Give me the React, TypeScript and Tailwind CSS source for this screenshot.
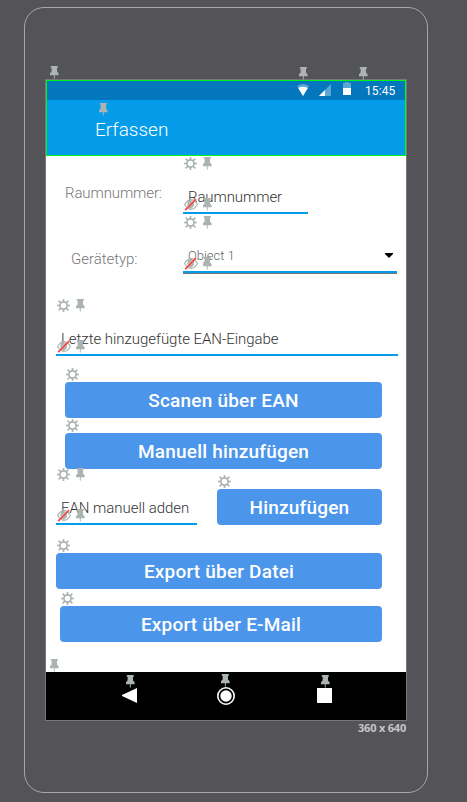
import type { ReactNode } from 'react';

function Pin({ className = '' }: { className?: string }) {
  return (
    <svg className={`absolute h-[13px] w-[9px] ${className}`} viewBox="0 0 9 13" fill="#abb3b3">
      <path d="M.8 0H7.8V1.7H7V5.5L8.6 7.3V9.3H0V7.3L1.6 5.5V1.7H.8Z" />
      <rect x="3.8" y="9" width="1.1" height="3.6" opacity=".85" />
    </svg>
  );
}

function Gear({ className = '' }: { className?: string }) {
  return (
    <svg className={`absolute h-[13px] w-[13px] ${className}`} viewBox="0 0 13 13" fill="none" stroke="#abb3b3">
      <circle cx="6.5" cy="6.5" r="3.6" strokeWidth="1.7" />
      <path
        d="M6.5 0V3M6.5 10V13M0 6.5H3M10 6.5H13M1.6 1.6L4 4M9 9L11.4 11.4M11.4 1.6L9 4M4 9L1.6 11.4"
        strokeWidth="1.6"
      />
    </svg>
  );
}

function HiddenEye() {
  return (
    <svg className="absolute bottom-[3px] left-[1px] h-[13px] w-[14px]" viewBox="0 0 14 13" fill="none">
      <path d="M.6 6.5Q3.5 1.6 7 1.6T13.4 6.5Q10.5 11.4 7 11.4T.6 6.5Z" stroke="#abb3b3" strokeWidth="1.2" />
      <path d="M7 2.2A3.6 4.2 0 0 0 7 10.8L10 8V3Z" fill="#abb3b3" />
      <path d="M1 12L12 1" stroke="#fff" strokeWidth="2.6" opacity=".45" />
      <path d="M1.2 12.2L12 1.2" stroke="#f2463f" strokeWidth="1.7" />
    </svg>
  );
}

function Field({ className, line, children }: { className: string; line: string; children: ReactNode }) {
  return (
    <div className={`relative flex h-[33px] items-start ${line} ${className}`}>
      {children}
      <Gear className="-top-[24px] left-[1px]" />
      <Pin className="-top-[24px] left-[20px]" />
      <HiddenEye />
      <Pin className="bottom-[3px] left-[20px]" />
    </div>
  );
}

function Button({ className, children }: { className: string; children: ReactNode }) {
  return (
    <div
      className={`relative flex h-9 shrink-0 items-center justify-center rounded-[4px] bg-[#4b95eb] pt-0.5 text-[19px] font-medium tracking-[0.2px] text-white ${className}`}
    >
      {children}
      <Gear className="-top-[14px] left-[1px]" />
    </div>
  );
}

const underline = 'shadow-[inset_0_-2px_0_#049be8]';

export default function App() {
  return (
    <div className="h-[802px] w-[467px] overflow-hidden bg-[#545358] pt-[7px] pl-6 font-['Roboto','Liberation_Sans',sans-serif]">
      <div className="h-[786px] w-[404px] rounded-[20px] border border-[#a6a6a9] pt-[71px] pl-5">
        <div className="relative flex h-[642px] w-[362px] flex-col border border-[#777]">
          <header className="flex h-[76px] shrink-0 flex-col border border-[#00f51d] bg-[#049be8] text-white">
            <div className="flex h-[19px] items-center bg-[#0277bd] pl-[250px]">
              <svg className="-mt-px h-3 w-3" viewBox="0 0 12 12" fill="#fff">
                <path d="M0 2Q6-2 12 2L6 12Z" opacity=".35" />
                <path d="M1.2 4Q6 1.3 10.8 4L6 12Z" />
              </svg>
              <svg className="-mt-px ml-[10px] h-3 w-3" viewBox="0 0 12 12" fill="#fff">
                <path d="M12 0V12H0Z" opacity=".35" />
                <path d="M6 6V12H0Z" />
              </svg>
              <svg className="-mt-1 ml-3 h-[13px] w-2" viewBox="0 0 8 13" fill="#fff">
                <path d="M2 0H6V1H8V6H0V1H2Z" opacity=".35" />
                <path d="M0 6H8V13H0Z" />
              </svg>
              <span className="ml-[14px] text-[12px] leading-none tracking-[0.1px]">15:45</span>
            </div>
            <div className="pt-[18px] pl-12 text-[19px] leading-[24px] font-light">Erfassen</div>
          </header>

          <main className="flex h-[516px] shrink-0 flex-col bg-white text-[15px] font-light tracking-[-0.04px] text-[#333]">
            <div className="flex h-[58px] items-end">
              <span className="w-[137px] pb-[12px] pl-[19px] leading-[18px] tracking-[-0.12px] text-[#777]">
                Raumnummer:
              </span>
              <Field className="w-[125px] pl-[5px]" line={underline}>
                <span className="pt-[7px] leading-[18px] tracking-[-0.1px]">Raumnummer</span>
              </Field>
            </div>
            <div className="flex h-[60px] items-end">
              <span className="w-[137px] pb-[6px] pl-[25px] leading-[18px] text-[#777]">Gerätetyp:</span>
              <div className="h-[34px] border-b border-[#777]">
                <Field className="w-[214px] pr-1 pl-[5px]" line={underline}>
                  <span className="pt-2 text-[13px] leading-[16px] text-[#666]">Object 1</span>
                  <svg className="mt-[13px] ml-auto h-[5px] w-2" viewBox="0 0 8 5">
                    <path d="M0 0H8V1L4 5L0 1Z" fill="#000" />
                  </svg>
                </Field>
              </div>
            </div>
            <Field className="mt-[49px] ml-[10px] w-[342px] shrink-0 pl-[5px]" line={underline}>
              <span className="pt-[7px] leading-[18px]">Letzte hinzugefügte EAN-Eingabe</span>
            </Field>
            <Button className="mt-[26px] ml-[19px] w-[317px]">Scanen über EAN</Button>
            <Button className="mt-[15px] ml-[19px] w-[317px]">Manuell hinzufügen</Button>
            <div className="mt-5 flex h-9 shrink-0 items-end gap-5 pl-[10px]">
              <Field className="w-[141px] pl-[5px]" line={underline}>
                <span className="pt-[7px] leading-[18px]">EAN manuell adden</span>
              </Field>
              <Button className="w-[165px]">Hinzufügen</Button>
            </div>
            <Button className="mt-7 ml-[10px] w-[326px]">Export über Datei</Button>
            <Button className="mt-[17px] ml-[14px] w-[322px]">Export über E-Mail</Button>
          </main>

          <nav className="flex h-12 shrink-0 items-center bg-black pb-px pl-[76px]">
            <svg className="h-[15px] w-[15px]" viewBox="0 0 15 15" fill="#fff">
              <path d="M15 0V15L0 8V7Z" />
            </svg>
            <svg className="mt-px ml-[80px] h-[18px] w-[18px]" viewBox="0 0 18 18">
              <circle cx="9" cy="9" r="8.2" fill="none" stroke="#fff" strokeWidth="1.6" />
              <circle cx="9" cy="9" r="5.7" fill="#fff" />
            </svg>
            <span className="ml-[82px] h-[15px] w-[15px] bg-white" />
          </nav>

          <Pin className="top-[-14px] left-[4px]" />
          <Pin className="top-[-13px] left-[253px]" />
          <Pin className="top-[-13px] left-[313px]" />
          <Pin className="top-[23px] left-[53px]" />
          <Pin className="top-[579px] left-[4px]" />
          <Pin className="top-[595px] left-[80px]" />
          <Pin className="top-[594px] left-[175px]" />
          <Pin className="top-[595px] left-[275px]" />
        </div>
        <div className="w-[361px] text-right font-['Open_Sans','Noto_Sans',sans-serif] text-[11px] leading-[13px] font-bold tracking-[-0.2px] text-[#c4c6c6]">
          360 x 640
        </div>
      </div>
    </div>
  );
}
